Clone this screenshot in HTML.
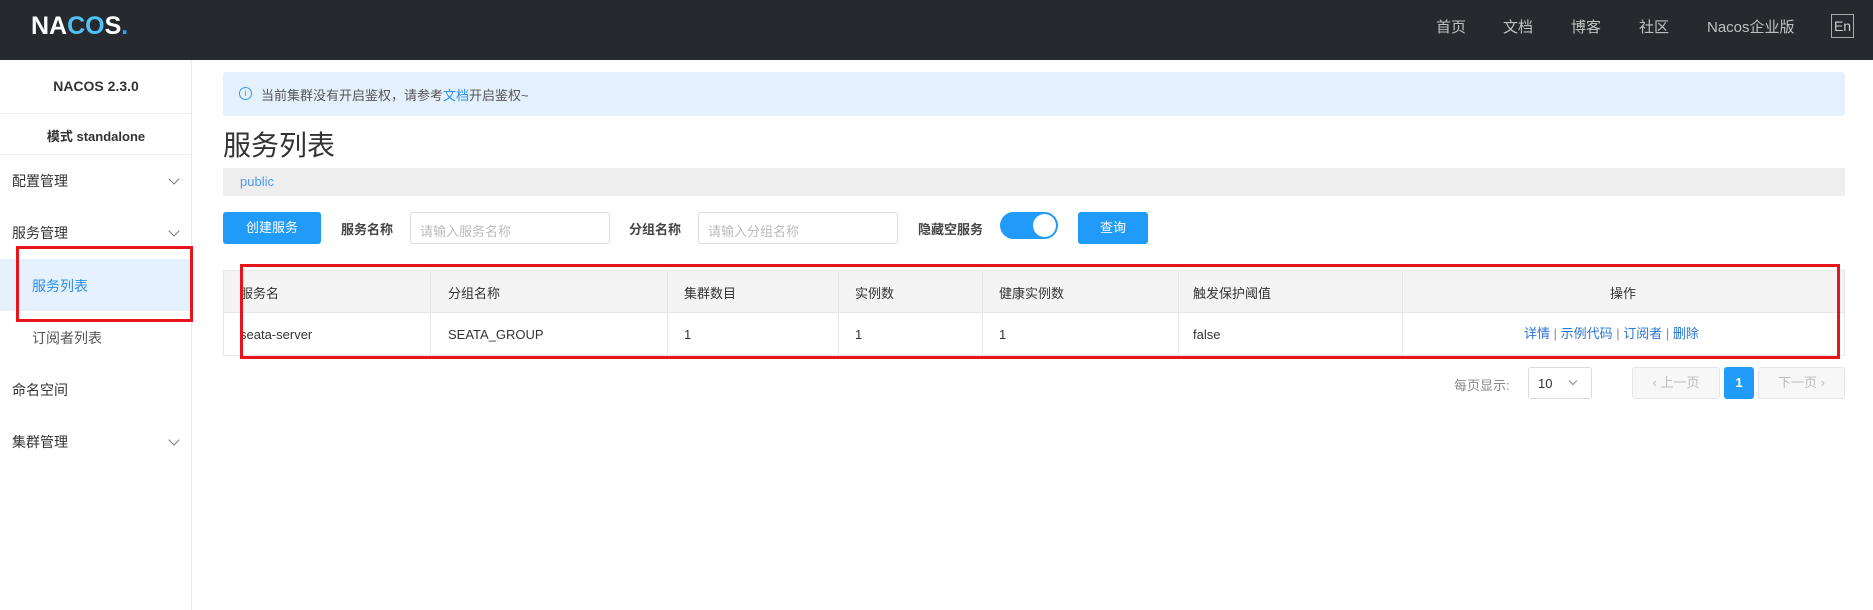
<!DOCTYPE html>
<html><head><meta charset="utf-8"><style>
*{box-sizing:border-box;margin:0;padding:0}
body{width:1873px;height:610px;background:#fff;font-family:"Liberation Sans","Noto Sans CJK SC",sans-serif;position:relative;overflow:hidden;color:#333}
.a{position:absolute}
.hdr{left:0;top:0;width:1873px;height:60px;background:#262a2f}
.nav{top:16px;font-size:15px;color:#c0c0c0}
.side{left:0;top:60px;width:192px;height:550px;border-right:1px solid #e8e8e8}
.mi{left:12px;font-size:14px;color:#333}
.chev{left:170px;width:8px;height:8px;border-right:1px solid #777;border-bottom:1px solid #777;transform:rotate(45deg)}
.lbl{font-size:13px;font-weight:bold;color:#444;top:219px}
.inp{top:212px;height:32px;border:1px solid #ddd;border-radius:3px;font-size:13px;color:#bbb;padding:8px 9px}
.btn{background:#209bfa;color:#fff;border-radius:3px;font-size:13px;text-align:center;line-height:32px;top:212px;height:32px}
.th{top:270px;height:43px;background:#f4f4f4;border-top:1px solid #e6e6e6;border-bottom:1px solid #e6e6e6}
.cs{width:1px;background:#e6e6e6;top:270px;height:86px}
.t{font-size:13px;color:#333;line-height:16px}
.red{border:3px solid #e8141c}
</style></head><body>
<div class="a hdr"></div>
<div class="a" style="left:31px;top:12px;font-size:25px;font-weight:bold;color:#fff">NA<span style="color:#4fc3f7">CO</span>S<span style="color:#2aa6f0">.</span></div>
<div class="a nav" style="left:1436px">首页</div>
<div class="a nav" style="left:1503px">文档</div>
<div class="a nav" style="left:1571px">博客</div>
<div class="a nav" style="left:1639px">社区</div>
<div class="a nav" style="left:1707px">Nacos企业版</div>
<div class="a" style="left:1831px;top:14px;width:23px;height:24px;border:1px solid #aaa;color:#ccc;font-size:14px;text-align:center;line-height:22px">En</div>

<div class="a side"></div>
<div class="a" style="left:0;width:192px;top:78px;text-align:center;font-size:14px;font-weight:bold;color:#333">NACOS 2.3.0</div>
<div class="a" style="left:0;width:191px;top:113px;height:1px;background:#eee"></div>
<div class="a" style="left:0;width:192px;top:126px;text-align:center;font-size:13px;font-weight:bold;color:#333">模式 standalone</div>
<div class="a" style="left:0;width:191px;top:154px;height:1px;background:#eee"></div>
<div class="a mi" style="top:171px">配置管理</div><div class="a chev" style="top:175px"></div>
<div class="a mi" style="top:223px">服务管理</div><div class="a chev" style="top:227px"></div>
<div class="a" style="left:0;top:259px;width:191px;height:52px;background:#e5f2fd"></div>
<div class="a mi" style="left:32px;top:276px;color:#2a8ff0">服务列表</div>
<div class="a mi" style="left:32px;top:328px;color:#555">订阅者列表</div>
<div class="a mi" style="top:380px">命名空间</div>
<div class="a mi" style="top:432px">集群管理</div><div class="a chev" style="top:436px"></div>
<div class="a red" style="left:16px;top:246px;width:177px;height:76px"></div>

<div class="a" style="left:223px;top:72px;width:1622px;height:44px;background:#e4f1fc;border-radius:3px"></div>
<div class="a" style="left:239px;top:87px;width:13px;height:13px;border:1px solid #3e95f0;border-radius:50%;font-size:9px;color:#3e95f0;text-align:center;line-height:11px">i</div>
<div class="a" style="left:261px;top:85px;font-size:13px;color:#555">当前集群没有开启鉴权，请参考<span style="color:#2a8ff0">文档</span>开启鉴权~</div>
<div class="a" style="left:223px;top:124px;font-size:28px;color:#333">服务列表</div>
<div class="a" style="left:223px;top:168px;width:1622px;height:28px;background:#eee"></div>
<div class="a" style="left:240px;top:174px;font-size:13px;color:#4a9bf0">public</div>

<div class="a btn" style="left:223px;width:98px">创建服务</div>
<div class="a lbl" style="left:341px">服务名称</div>
<div class="a inp" style="left:410px;width:200px">请输入服务名称</div>
<div class="a lbl" style="left:629px">分组名称</div>
<div class="a inp" style="left:698px;width:200px">请输入分组名称</div>
<div class="a lbl" style="left:918px">隐藏空服务</div>
<div class="a" style="left:1000px;top:212px;width:58px;height:27px;border-radius:14px;background:#209bfa"></div>
<div class="a" style="left:1033px;top:214px;width:23px;height:23px;border-radius:50%;background:#fff"></div>
<div class="a btn" style="left:1078px;width:70px">查询</div>

<div class="a th" style="left:223px;width:1622px"></div>
<div class="a" style="left:223px;top:313px;width:1622px;height:43px;border-bottom:1px solid #e6e6e6"></div>
<div class="a cs" style="left:223px"></div><div class="a cs" style="left:430px"></div><div class="a cs" style="left:667px"></div><div class="a cs" style="left:838px"></div><div class="a cs" style="left:982px"></div><div class="a cs" style="left:1178px"></div><div class="a cs" style="left:1402px"></div><div class="a cs" style="left:1844px"></div>
<div class="a t" style="left:240px;top:286px">服务名</div>
<div class="a t" style="left:448px;top:286px">分组名称</div>
<div class="a t" style="left:684px;top:286px">集群数目</div>
<div class="a t" style="left:855px;top:286px">实例数</div>
<div class="a t" style="left:999px;top:286px">健康实例数</div>
<div class="a t" style="left:1193px;top:286px">触发保护阈值</div>
<div class="a t" style="left:1610px;top:286px">操作</div>
<div class="a t" style="left:240px;top:327px">seata-server</div>
<div class="a t" style="left:448px;top:327px">SEATA_GROUP</div>
<div class="a t" style="left:684px;top:327px">1</div>
<div class="a t" style="left:855px;top:327px">1</div>
<div class="a t" style="left:999px;top:327px">1</div>
<div class="a t" style="left:1193px;top:327px">false</div>
<div class="a t" style="left:1524px;top:326px;color:#2a74d6;white-space:nowrap">详情 <span style="color:#888">|</span> 示例代码 <span style="color:#888">|</span> 订阅者 <span style="color:#888">|</span> 删除</div>
<div class="a red" style="left:240px;top:264px;width:1600px;height:95px"></div>

<div class="a" style="left:1454px;top:375px;font-size:13px;color:#888">每页显示:</div>
<div class="a" style="left:1528px;top:367px;width:64px;height:32px;border:1px solid #ddd;border-radius:3px;font-size:13px;color:#333;padding:8px 9px">10</div>
<div class="a" style="left:1570px;top:378px;width:6px;height:6px;border-right:1px solid #888;border-bottom:1px solid #888;transform:rotate(45deg)"></div>
<div class="a" style="left:1632px;top:367px;width:88px;height:32px;border:1px solid #e6e6e6;background:#f7f7f7;border-radius:3px;font-size:13px;color:#bbb;text-align:center;line-height:30px">‹ 上一页</div>
<div class="a" style="left:1724px;top:367px;width:30px;height:32px;background:#209bfa;border-radius:3px;font-size:13px;color:#fff;text-align:center;line-height:32px;font-weight:bold">1</div>
<div class="a" style="left:1758px;top:367px;width:87px;height:32px;border:1px solid #e6e6e6;background:#f7f7f7;border-radius:3px;font-size:13px;color:#bbb;text-align:center;line-height:30px">下一页 ›</div>
</body></html>
